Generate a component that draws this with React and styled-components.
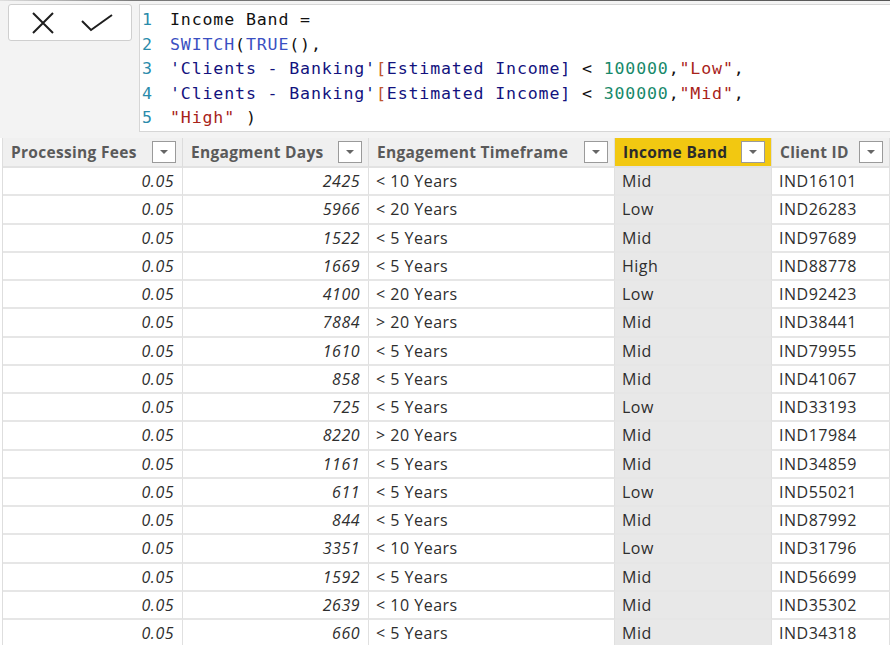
import React from 'react';
import styled, {createGlobalStyle} from 'styled-components';

const GlobalStyle = createGlobalStyle`
  body {
    margin: 0;
    background: #fff;
    overflow: hidden;
  }
`;

const Page = styled.div`
  width: 890px;
  height: 645px;
  overflow: hidden;
  font-family: "Open Sans", "Noto Sans", sans-serif;
`;

const FormulaBar = styled.div`
  display: flex;
  align-items: flex-start;
  height: 138px;
  box-sizing: border-box;
  padding-top: 3px;
  background: #f3f3f3;
  border-top: 1px solid transparent;
  border-image: linear-gradient(to right, #e0e0e0, #7a7a7a 15%, #555) 1;
  border-width: 1px 0 0 0;
`;

const ActionBox = styled.div`
  display: flex;
  align-items: center;
  gap: 26px;
  margin-left: 8px;
  width: 124px;
  height: 37px;
  box-sizing: border-box;
  padding-left: 22px;
  background: #fff;
  border: 1px solid #cfcfcf;
  border-radius: 3px;
`;

const Editor = styled.div`
  margin-left: 7px;
  flex: 1;
  height: 128px;
  box-sizing: border-box;
  padding-top: 3px;
  background: #fff;
  border: 1px solid #d6d6d6;
  border-right: none;
  font-family: "DejaVu Sans Mono", "Liberation Mono", monospace;
  font-size: 16.6px;
  letter-spacing: 0.85px;
`;

const CodeLine = styled.div`
  display: flex;
  height: 24.5px;
  line-height: 24.5px;
  white-space: pre;
  color: #111;
`;

const LineNo = styled.span`
  width: 28px;
  padding-left: 2px;
  color: #2a8bab;
`;

const Tok = styled.span`
  color: ${p => ({
    kw: '#3a4fc2',
    table: '#12127e',
    bracket: '#c0552c',
    num: '#17896a',
    str: '#a8231a',
  }[p.$k] || '#111')};
`;

const Grid = styled.div`
  display: grid;
  grid-template-columns: 180px 186px 246px 157px 1fr;
  grid-template-rows: 30px;
  grid-auto-rows: 28.25px;
  margin-left: 2px;
  border-left: 1px solid #dedede;
`;

const HeadCell = styled.div`
  display: flex;
  align-items: center;
  justify-content: space-between;
  padding: 0 6px 0 8px;
  background: ${p => (p.$active ? '#f2c811' : '#f0f0f0')};
  color: ${p => (p.$active ? '#2b2b2b' : '#5a5a5a')};
  border-right: 1px solid #dcdcdc;
  border-bottom: 2px solid #e2e2e2;
  font-weight: 700;
  font-size: 15.5px;
  letter-spacing: 0.3px;
  white-space: nowrap;
  overflow: hidden;
`;

const FilterBtn = styled.div`
  display: flex;
  align-items: center;
  justify-content: center;
  flex: none;
  width: 24px;
  height: 22px;
  box-sizing: border-box;
  background: #fff;
  border: 1px solid #9a9a9a;

  &::after {
    content: '';
    border-left: 4px solid transparent;
    border-right: 4px solid transparent;
    border-top: 4px solid #666;
  }
`;

const Cell = styled.div`
  display: flex;
  align-items: center;
  justify-content: ${p => (p.$num ? 'flex-end' : 'flex-start')};
  padding: ${p => (p.$num ? '0 8px 0 0' : '0 0 0 7px')};
  background: ${p => (p.$shade ? '#e8e8e8' : '#fff')};
  border-right: 1px solid #e0e0e0;
  border-bottom: 2px solid #e6e6e6;
  color: #2e2e2e;
  font-size: 16px;
  letter-spacing: 0.5px;
  font-style: ${p => (p.$num ? 'italic' : 'normal')};
  white-space: nowrap;
  overflow: hidden;
`;

const columns = ['Processing Fees', 'Engagment Days', 'Engagement Timeframe', 'Income Band', 'Client ID'];

const rows = [
  [2425, '< 10 Years', 'Mid', 'IND16101'],
  [5966, '< 20 Years', 'Low', 'IND26283'],
  [1522, '< 5 Years', 'Mid', 'IND97689'],
  [1669, '< 5 Years', 'High', 'IND88778'],
  [4100, '< 20 Years', 'Low', 'IND92423'],
  [7884, '> 20 Years', 'Mid', 'IND38441'],
  [1610, '< 5 Years', 'Mid', 'IND79955'],
  [858, '< 5 Years', 'Mid', 'IND41067'],
  [725, '< 5 Years', 'Low', 'IND33193'],
  [8220, '> 20 Years', 'Mid', 'IND17984'],
  [1161, '< 5 Years', 'Mid', 'IND34859'],
  [611, '< 5 Years', 'Low', 'IND55021'],
  [844, '< 5 Years', 'Mid', 'IND87992'],
  [3351, '< 10 Years', 'Low', 'IND31796'],
  [1592, '< 5 Years', 'Mid', 'IND56699'],
  [2639, '< 10 Years', 'Mid', 'IND35302'],
  [660, '< 5 Years', 'Mid', 'IND34318'],
];

const code = [
  [['', 'Income Band =']],
  [['kw', 'SWITCH'], ['', '('], ['kw', 'TRUE'], ['', '(),']],
  [['table', "'Clients - Banking'"], ['bracket', '['], ['table', 'Estimated Income]'], ['', ' < '], ['num', '100000'], ['', ','], ['str', '"Low"'], ['', ',']],
  [['table', "'Clients - Banking'"], ['bracket', '['], ['table', 'Estimated Income]'], ['', ' < '], ['num', '300000'], ['', ','], ['str', '"Mid"'], ['', ',']],
  [['str', '"High"'], ['', ' )']],
];

const CloseIcon = () => (
  <svg width="24" height="22" viewBox="0 0 24 22">
    <path d="M2 1 L22 21 M22 1 L2 21" stroke="#1e1e1e" strokeWidth="2" fill="none" />
  </svg>
);

const CheckIcon = () => (
  <svg width="32" height="18" viewBox="0 0 32 18">
    <path d="M1 7 L10 16 L31 1" stroke="#1e1e1e" strokeWidth="2" fill="none" />
  </svg>
);

function App() {
  return (
    <Page>
      <GlobalStyle />
      <FormulaBar>
        <ActionBox>
          <CloseIcon />
          <CheckIcon />
        </ActionBox>
        <Editor>
          {code.map((line, i) => (
            <CodeLine key={i}>
              <LineNo>{i + 1}</LineNo>
              {line.map(([k, t], j) => <Tok key={j} $k={k}>{t}</Tok>)}
            </CodeLine>
          ))}
        </Editor>
      </FormulaBar>

      <Grid>
        {columns.map(c => (
          <HeadCell key={c} $active={c === 'Income Band'}>
            <span>{c}</span>
            <FilterBtn />
          </HeadCell>
        ))}
        {rows.map(([days, span, band, id]) => (
          <React.Fragment key={id}>
            <Cell $num>0.05</Cell>
            <Cell $num>{days}</Cell>
            <Cell>{span}</Cell>
            <Cell $shade>{band}</Cell>
            <Cell>{id}</Cell>
          </React.Fragment>
        ))}
      </Grid>
    </Page>
  );
}

export default App;
